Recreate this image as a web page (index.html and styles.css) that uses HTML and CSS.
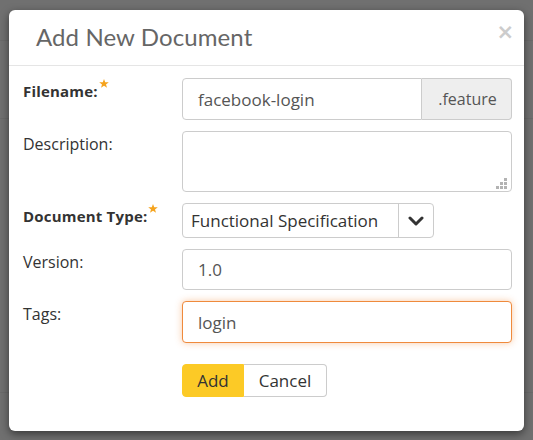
FILE: index.html
```html
<!DOCTYPE html>
<html>
<head>
<meta charset="utf-8">
<link rel="stylesheet" href="styles.css">
</head>
<body>
<div class="backdrop">
  <div class="modal">
    <div class="modal-header">
      <h4 class="modal-title">Add New Document</h4>
      <span class="close">&times;</span>
    </div>
    <div class="modal-body">
      <form class="form">
        <label class="label bold">Filename:<svg class="star" width="10" height="9" viewBox="0 0 10 9"><path d="M5 0 L6.2 3.2 L9.8 3.3 L7 5.4 L8 8.8 L5 6.8 L2 8.8 L3 5.4 L0.2 3.3 L3.8 3.2 Z" fill="#f5a31d"/></svg></label>
        <div class="input-group">
          <div class="input h42 grow">facebook-login</div>
          <div class="addon">.feature</div>
        </div>

        <label class="label">Description:</label>
        <div class="textarea-wrap">
          <div class="input h61"></div>
          <span class="grip">
            <i class="d" style="left:8px;top:0"></i>
            <i class="d" style="left:4px;top:4px"></i><i class="d" style="left:8px;top:4px"></i>
            <i class="d" style="left:0;top:8px"></i><i class="d" style="left:4px;top:8px"></i><i class="d" style="left:8px;top:8px"></i>
          </span>
        </div>

        <label class="label bold">Document Type:<svg class="star" width="10" height="9" viewBox="0 0 10 9"><path d="M5 0 L6.2 3.2 L9.8 3.3 L7 5.4 L8 8.8 L5 6.8 L2 8.8 L3 5.4 L0.2 3.3 L3.8 3.2 Z" fill="#f5a31d"/></svg></label>
        <div class="select">
          <span class="select-text">Functional Specification</span>
          <span class="select-btn">
            <svg width="16" height="10" viewBox="0 0 16 10"><path d="M2 2 L8 8 L14 2" fill="none" stroke="#333" stroke-width="3" stroke-linecap="round" stroke-linejoin="round"/></svg>
          </span>
        </div>

        <label class="label">Version:</label>
        <div class="input h41">1.0</div>

        <label class="label">Tags:</label>
        <div class="input h42 focus">login</div>

        <span></span>
        <div class="buttons">
          <button type="button" class="btn btn-add">Add</button><button type="button" class="btn btn-cancel">Cancel</button>
        </div>
      </form>
    </div>
  </div>
</div>
</body>
</html>
```

FILE: styles.css
```css
html, body {
  margin: 0;
  padding: 0;
}
body {
  width: 533px;
  height: 440px;
  overflow: hidden;
  background: #707070;
  font-family: "Open Sans", "DejaVu Sans", sans-serif;
}
.backdrop {
  height: 440px;
  padding: 10px 0 0 9px;
  box-sizing: border-box;
  background:
    linear-gradient(#6a6a6a, #6a6a6a) 0 40px / 100% 1px no-repeat,
    linear-gradient(#6a6a6a, #6a6a6a) 0 118px / 100% 1px no-repeat,
    linear-gradient(#6a6a6a, #6a6a6a) 0 392px / 100% 1px no-repeat,
    #707070;
}
.modal {
  width: 515px;
  height: 421px;
  background: #fff;
  border-radius: 6px;
  box-shadow: 0 3px 9px rgba(0, 0, 0, 0.5);
  box-sizing: border-box;
}
.modal-header {
  height: 56px;
  border-bottom: 1px solid #e5e5e5;
  box-sizing: border-box;
  display: flex;
  align-items: flex-start;
  justify-content: space-between;
  padding: 0 10px 0 27px;
}
.modal-title {
  margin: 0;
  padding-top: 12px;
  font-family: Lato, "Open Sans", sans-serif;
  font-weight: 400;
  font-size: 24px;
  line-height: 30px;
  letter-spacing: 0.1px;
  color: #666;
}
.close {
  font-family: "DejaVu Sans", sans-serif;
  font-weight: bold;
  font-size: 21px;
  line-height: 21px;
  color: #ccc;
  padding-top: 12px;
}
.modal-body {
  padding: 12px 12px 0 14px;
}
.form {
  display: grid;
  grid-template-columns: 159px 330px;
  row-gap: 11px;
  margin: 0;
}
.label {
  font-size: 16px;
  line-height: 20px;
  padding-top: 3px;
  color: #333;
  display: flex;
  align-items: flex-start;
}
.label.bold {
  font-size: 15px;
  font-weight: 700;
  letter-spacing: 0.2px;
}
.star {
  margin-left: 1px;
  margin-top: -2px;
}
.input {
  box-sizing: border-box;
  border: 1px solid #ccc;
  border-radius: 4px;
  padding: 0 15px;
  font-size: 17px;
  color: #555;
  display: flex;
  align-items: center;
  background: #fff;
}
.h42 { height: 42px; }
.h41 { height: 41px; }
.h61 { height: 61px; }
.input.focus {
  border-color: #ef8a3c;
  box-shadow: 0 0 7px rgba(239, 138, 60, 0.45);
}
.input-group {
  display: flex;
}
.grow {
  flex: 1;
  border-radius: 4px 0 0 4px;
}
.addon {
  width: 90px;
  box-sizing: border-box;
  border: 1px solid #ccc;
  border-left: 0;
  border-radius: 0 4px 4px 0;
  background: #eee;
  color: #555;
  font-size: 16px;
  display: flex;
  align-items: center;
  justify-content: center;
  padding-left: 2px;
}
.textarea-wrap {
  position: relative;
}
.grip {
  position: absolute;
  right: 5px;
  bottom: 3px;
  width: 11px;
  height: 11px;
}
.grip .d {
  position: absolute;
  width: 3px;
  height: 3px;
  background: #b3b3b3;
}
.select {
  width: 252px;
  height: 35px;
  box-sizing: border-box;
  border: 1px solid #ccc;
  border-radius: 4px;
  display: flex;
  align-items: stretch;
}
.select-text {
  flex: 1;
  display: flex;
  align-items: center;
  padding-left: 8px;
  font-size: 17px;
  color: #333;
  border-right: 1px solid #ccc;
}
.select-btn {
  width: 34px;
  display: flex;
  align-items: center;
  justify-content: center;
}
.buttons {
  display: flex;
  margin-top: 10px;
}
.btn {
  height: 33px;
  box-sizing: border-box;
  font-family: "Open Sans", sans-serif;
  font-size: 17px;
  color: #333;
  margin: 0;
  cursor: pointer;
}
.btn-add {
  width: 62px;
  background: #fcca26;
  border: 1px solid #fcca26;
  border-radius: 4px 0 0 4px;
}
.btn-cancel {
  width: 83px;
  background: #fff;
  border: 1px solid #ccc;
  border-left: 0;
  border-radius: 0 4px 4px 0;
}
```
